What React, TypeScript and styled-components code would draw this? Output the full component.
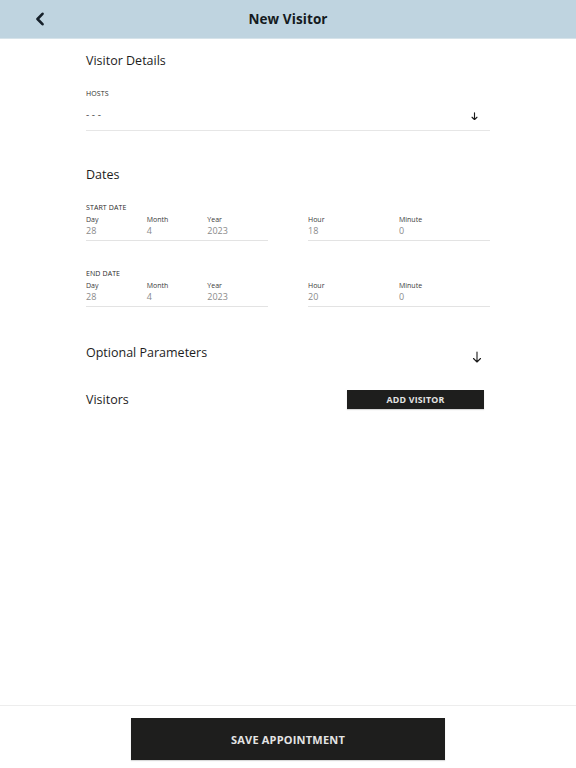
import React from "react";
import styled, { createGlobalStyle } from "styled-components";

const Global = createGlobalStyle`
  html, body { margin: 0; padding: 0; background: #fff; }
  body { font-family: "Open Sans", "Liberation Sans", sans-serif; color: #1b1b1b; }
  #root { height: 768px; }
`;

const Page = styled.div`
  height: 768px;
  display: flex;
  flex-direction: column;
`;

const Header = styled.header`
  height: 39px;
  flex: none;
  background: #bfd4e0;
  border-bottom: 1px solid #d6e3ea;
  box-sizing: border-box;
  display: grid;
  grid-template-columns: 78px 1fr 78px;
  align-items: center;
`;

const BackButton = styled.button`
  border: 0;
  background: none;
  padding: 0;
  margin-left: 33px;
  width: 14px;
  height: 16px;
  display: flex;
  align-items: center;
  justify-content: center;
  color: #16202a;
`;

const Title = styled.h1`
  margin: 0;
  text-align: center;
  font-size: 13.5px;
  font-weight: 700;
  color: #141a20;
  letter-spacing: 0.1px;
`;

const Content = styled.main`
  flex: 1;
  padding: 0 86px;
`;

const SectionTitle = styled.h2<{ $top: number }>`
  margin: ${(p) => p.$top}px 0 0;
  font-size: 12.5px;
  line-height: 16px;
  font-weight: 400;
  color: #1d1d1d;
`;

const SmallCaps = styled.div<{ $top: number }>`
  margin-top: ${(p) => p.$top}px;
  font-size: 7px;
  line-height: 9px;
  color: #2a2a2a;
  letter-spacing: 0.1px;
`;

const SelectRow = styled.div`
  margin-top: 10px;
  height: 22px;
  display: flex;
  align-items: flex-start;
  justify-content: space-between;
  border-bottom: 1px solid #e6e6e6;
  padding: 0 12px 0 0;
  font-size: 10px;
  line-height: 12px;
  color: #555;
`;

const DateRow = styled.div`
  margin-top: 3px;
  display: flex;
  justify-content: space-between;
`;

const FieldGroup = styled.div<{ $cols: number }>`
  width: 182px;
  display: grid;
  grid-template-columns: repeat(${(p) => p.$cols}, 1fr);
  border-bottom: 1.5px solid #e3e3e3;
  padding-bottom: 4px;
`;

const Field = styled.div`
  display: flex;
  flex-direction: column;
`;

const FieldLabel = styled.span`
  font-size: 7px;
  line-height: 9px;
  color: #3a3a3a;
`;

const FieldValue = styled.span`
  margin-top: 1px;
  font-size: 9px;
  line-height: 11px;
  color: #8a8a8a;
`;

const CollapseRow = styled.div`
  margin-top: 38px;
  display: flex;
  justify-content: space-between;
  align-items: flex-start;
  padding-right: 8px;
`;

const ArrowIcon = styled.span`
  margin-top: 6px;
  display: flex;
`;

const VisitorsRow = styled.div`
  margin-top: 27px;
  display: flex;
  justify-content: space-between;
  align-items: center;
  padding-right: 6px;
`;

const VisitorsTitle = styled.h2`
  margin: 0;
  font-size: 12.5px;
  line-height: 16px;
  font-weight: 400;
  color: #1d1d1d;
`;

const DarkButton = styled.button<{ $w: number; $h: number; $fs: number }>`
  width: ${(p) => p.$w}px;
  height: ${(p) => p.$h}px;
  background: #1e1e1d;
  color: #e4e4e4;
  border: 0;
  border-radius: 0;
  font-family: inherit;
  font-weight: 700;
  font-size: ${(p) => p.$fs}px;
  letter-spacing: 0.2px;
  padding: 0;
  box-shadow: 0 1px 1px rgba(0, 0, 0, 0.15);
`;

const Footer = styled.footer`
  flex: none;
  height: 63px;
  border-top: 1px solid #ededed;
  display: flex;
  justify-content: center;
  padding-top: 12px;
  box-sizing: border-box;
`;

const DownArrow = ({ size = 10, w = 1.3 }: { size?: number; w?: number }) => (
  <svg width={size} height={size * 1.2} viewBox="0 0 10 12" fill="none" stroke="#1a1a1a" strokeWidth={w} strokeLinecap="round" strokeLinejoin="round">
    <path d="M5 1v10M1.5 7.5 5 11l3.5-3.5" />
  </svg>
);

const DateFields = ({ day, month, year, hour, minute }: { day: string; month: string; year: string; hour: string; minute: string }) => (
  <DateRow>
    <FieldGroup $cols={3}>
      <Field><FieldLabel>Day</FieldLabel><FieldValue>{day}</FieldValue></Field>
      <Field><FieldLabel>Month</FieldLabel><FieldValue>{month}</FieldValue></Field>
      <Field><FieldLabel>Year</FieldLabel><FieldValue>{year}</FieldValue></Field>
    </FieldGroup>
    <FieldGroup $cols={2}>
      <Field><FieldLabel>Hour</FieldLabel><FieldValue>{hour}</FieldValue></Field>
      <Field><FieldLabel>Minute</FieldLabel><FieldValue>{minute}</FieldValue></Field>
    </FieldGroup>
  </DateRow>
);

export default function App() {
  return (
    <Page>
      <Global />
      <Header>
        <BackButton aria-label="Back">
          <svg width="10" height="14" viewBox="0 0 10 14" fill="none" stroke="currentColor" strokeWidth="2.6" strokeLinecap="round" strokeLinejoin="round">
            <path d="M7.5 1.8 2.5 7l5 5.2" />
          </svg>
        </BackButton>
        <Title>New Visitor</Title>
        <div />
      </Header>
      <Content>
        <SectionTitle $top={14}>Visitor Details</SectionTitle>
        <SmallCaps $top={20}>HOSTS</SmallCaps>
        <SelectRow>
          <span>- - -</span>
          <span style={{ marginTop: 2 }}>
            <DownArrow size={7} w={1.6} />
          </span>
        </SelectRow>
        <SectionTitle $top={36}>Dates</SectionTitle>
        <SmallCaps $top={20}>START DATE</SmallCaps>
        <DateFields day="28" month="4" year="2023" hour="18" minute="0" />
        <SmallCaps $top={28}>END DATE</SmallCaps>
        <DateFields day="28" month="4" year="2023" hour="20" minute="0" />
        <CollapseRow>
          <SectionTitle $top={0}>Optional Parameters</SectionTitle>
          <ArrowIcon>
            <DownArrow size={10} w={1.1} />
          </ArrowIcon>
        </CollapseRow>
        <VisitorsRow>
          <VisitorsTitle>Visitors</VisitorsTitle>
          <DarkButton $w={137} $h={19} $fs={8.8}>ADD VISITOR</DarkButton>
        </VisitorsRow>
      </Content>
      <Footer>
        <DarkButton $w={314} $h={42} $fs={11}>SAVE APPOINTMENT</DarkButton>
      </Footer>
    </Page>
  );
}
